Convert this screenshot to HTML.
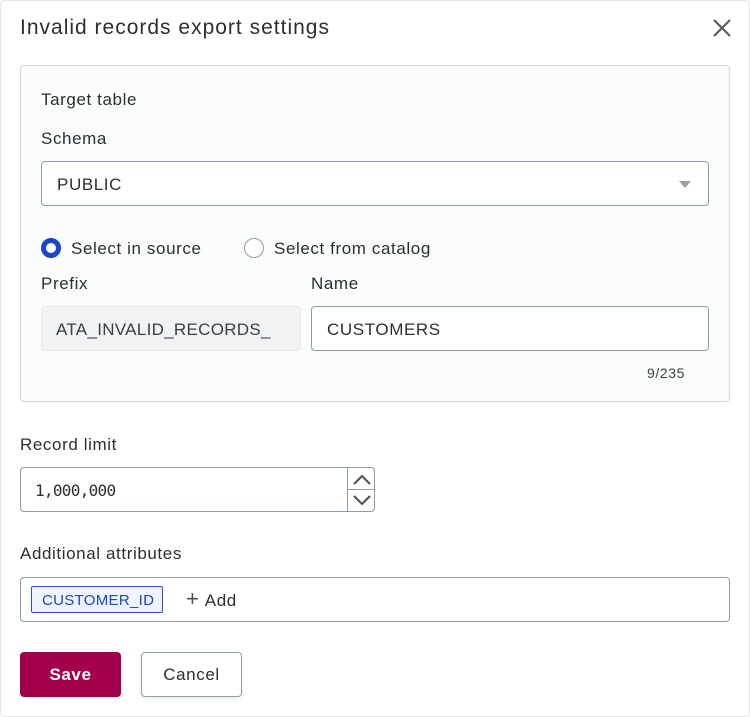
<!DOCTYPE html>
<html><head><style>
*{box-sizing:border-box;margin:0;padding:0}
body{width:750px;height:717px;background:#fff;font-family:"Liberation Sans",sans-serif;color:#2b2f33;position:relative;overflow:hidden}
.a{position:absolute}
.t{font-size:17px;line-height:20px;white-space:nowrap;letter-spacing:0.6px}
.box{position:absolute;border:1px solid #8d9aa7;border-radius:4px;background:#fff}
</style></head><body>
<div class="a" style="left:0;top:0;width:750px;height:717px;border:1px solid #e3e6e9;border-radius:4px"></div>
<div class="a t" style="left:20px;top:15px;font-size:21px;line-height:26px;letter-spacing:1px">Invalid records export settings</div>
<svg class="a" style="left:711px;top:17px" width="22" height="22" viewBox="0 0 22 22"><path d="M3 3L19 19M19 3L3 19" stroke="#5a5f64" stroke-width="2.2"/></svg>
<div class="a" style="left:20px;top:65px;width:710px;height:337px;border:1px solid #cfd5da;border-radius:4px;background:#fbfcfc"></div>
<div class="a t" style="left:41px;top:90px">Target table</div>
<div class="a t" style="left:41px;top:129px">Schema</div>
<div class="box" style="left:41px;top:161px;width:668px;height:45px"></div>
<div class="a t" style="left:57px;top:175px">PUBLIC</div>
<svg class="a" style="left:678px;top:180px" width="14" height="9"><path d="M1 1H13L7 8Z" fill="#9aa0a6"/></svg>
<div class="a" style="left:41px;top:238px;width:20px;height:20px;border-radius:50%;border:5px solid #1a47c8;background:#fff"></div>
<div class="a t" style="left:71px;top:239px">Select in source</div>
<div class="a" style="left:244px;top:238px;width:20px;height:20px;border-radius:50%;border:1.5px solid #8d9aa7;background:#fff"></div>
<div class="a t" style="left:274px;top:239px">Select from catalog</div>
<div class="a t" style="left:41px;top:274px">Prefix</div>
<div class="a t" style="left:311px;top:274px">Name</div>
<div class="a" style="left:41px;top:306px;width:260px;height:45px;border-radius:4px;background:#f0f2f4;border:1px solid #e6e9ec"></div>
<div class="a t" style="left:56px;top:320px;color:#3a3f44;letter-spacing:0.3px">ATA_INVALID_RECORDS_</div>
<div class="box" style="left:311px;top:306px;width:398px;height:45px"></div>
<div class="a t" style="left:327px;top:320px">CUSTOMERS</div>
<div class="a t" style="left:647px;top:363px;font-size:14px;color:#3a3f44">9/235</div>
<div class="a t" style="left:20px;top:435px">Record limit</div>
<div class="box" style="left:20px;top:467px;width:355px;height:45px"></div>
<div class="a" style="left:347px;top:467px;width:1px;height:45px;background:#8d9aa7"></div>
<div class="a" style="left:347px;top:489px;width:28px;height:1px;background:#8d9aa7"></div>
<svg class="a" style="left:350px;top:470px" width="24" height="40"><path d="M4 14L12 6L20 14M4 26L12 34L20 26" stroke="#4a4f54" stroke-width="2" fill="none"/></svg>
<div class="a t" style="left:35px;top:481px;font-family:'DejaVu Sans Mono','Liberation Mono',monospace;font-size:16px;letter-spacing:-0.7px">1,000,000</div>
<div class="a t" style="left:20px;top:544px">Additional attributes</div>
<div class="box" style="left:20px;top:577px;width:710px;height:45px"></div>
<div class="a" style="left:31px;top:586px;width:132px;height:27px;border:1px solid #2a52d2;border-radius:2px;background:#eef3fe"></div>
<div class="a t" style="left:42px;top:591px;font-size:15px;color:#1a47c8;letter-spacing:0.3px">CUSTOMER_ID</div>
<div class="a t" style="left:186px;top:589px"><span style="font-size:22px;color:#4a4f54">+</span>&nbsp;Add</div>
<div class="a" style="left:20px;top:652px;width:101px;height:45px;border-radius:4px;background:#a3004b"></div>
<div class="a t" style="left:20px;top:665px;width:101px;text-align:center;color:#fff;font-weight:bold">Save</div>
<div class="a" style="left:141px;top:652px;width:101px;height:45px;border-radius:4px;border:1px solid #8fa0ad;background:#fff;box-shadow:0 2px 4px rgba(0,0,0,.08)"></div>
<div class="a t" style="left:141px;top:665px;width:101px;text-align:center">Cancel</div>
</body></html>
